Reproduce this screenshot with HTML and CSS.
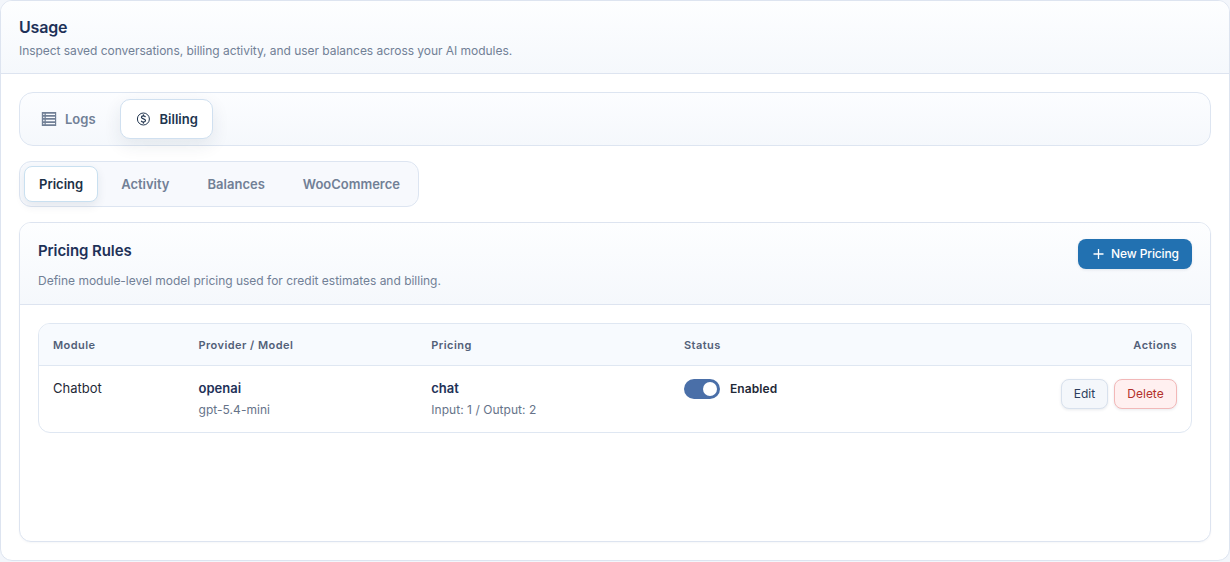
FILE: index.html
```html
<!DOCTYPE html>
<html lang="en">
<head>
<meta charset="utf-8">
<title>Usage</title>
<link rel="stylesheet" href="styles.css">
</head>
<body>
<main class="page">
  <header class="page-head">
    <h1 class="page-title">Usage</h1>
    <p class="page-desc">Inspect saved conversations, billing activity, and user balances across your AI modules.</p>
  </header>
  <div class="page-body">
    <nav class="tabs">
      <button class="tab">
        <svg class="tab-icon" viewBox="0 0 16 16"><path fill="currentColor" fill-rule="evenodd" d="M.8 1h14.400v14H.8zM2.200 2.700v1.300h1.300V2.700zm2.600 0v1.300H14V2.700zM2.200 5.700v1.400h1.300V5.700zm2.600 0v1.400H14V5.700zM2.200 8.800v1.400h1.300V8.800zm2.600 0v1.400H14V8.800zM2.200 12v1.300h1.300V12zm2.600 0v1.300H14V12z"/></svg>
        <span>Logs</span>
      </button>
      <button class="tab tab-active">
        <svg class="tab-icon" viewBox="0 0 16 16" fill="none" stroke="currentColor"><circle cx="7.400" cy="8" r="6" stroke-width="1"/><path stroke-width="1.200" d="M9.500 6.100C9.200 5.300 8.500 4.900 7.400 4.900c-1.200 0-2 .5-2 1.400C5.400 8.400 9.500 7.500 9.500 9.600c0 1-.9 1.500-2.100 1.500-1.100 0-1.900-.4-2.200-1.300"/><path stroke-width="1" d="M7.400 3.300v1.800M7.400 10.900v1.800"/></svg>
        <span>Billing</span>
      </button>
    </nav>
    <nav class="subtabs">
      <button class="subtab subtab-active">Pricing</button>
      <button class="subtab">Activity</button>
      <button class="subtab">Balances</button>
      <button class="subtab subtab-last">WooCommerce</button>
    </nav>
    <section class="card">
      <header class="card-head">
        <div>
          <h2 class="card-title">Pricing Rules</h2>
          <p class="card-desc">Define module-level model pricing used for credit estimates and billing.</p>
        </div>
        <button class="btn btn-primary">
          <svg class="plus" viewBox="0 0 12 12"><path d="M6.500 1v10M1.500 6h10" stroke="currentColor" stroke-width="1.300" fill="none"/></svg>
          <span>New Pricing</span>
        </button>
      </header>
      <div class="card-body">
        <div class="table">
          <div class="row row-head">
            <span>Module</span><span>Provider / Model</span><span>Pricing</span><span>Status</span><span class="end">Actions</span>
          </div>
          <div class="row row-data">
            <div class="module">Chatbot</div>
            <div><div class="primary">openai</div><div class="secondary">gpt-5.4-mini</div></div>
            <div><div class="primary">chat</div><div class="secondary">Input: 1 / Output: 2</div></div>
            <div class="status"><span class="switch"><span class="knob"></span></span><span class="status-text">Enabled</span></div>
            <div class="actions"><button class="btn btn-edit">Edit</button><button class="btn btn-delete">Delete</button></div>
          </div>
        </div>
      </div>
    </section>
  </div>
</main>
</body>
</html>
```

FILE: styles.css
```css
* { box-sizing: border-box; }
body { margin: 0; background: #f3f6fb; font-family: Inter, "Liberation Sans", sans-serif; color: #1f2937; }
h1, h2, p { margin: 0; }
button { font-family: inherit; margin: 0; border: 1px solid transparent; background: none; white-space: nowrap; }
.page { height: 561px; border: 1px solid #dde4f0; border-radius: 12px; background: #fff; overflow: hidden; display: flex; flex-direction: column; }
.page-head { height: 73px; flex: none; padding: 16px 18px 0; border-bottom: 1px solid #dde4f0; background: linear-gradient(180deg, #fdfeff, #f5f8fc); }
.page-title { font-size: 16px; line-height: 21px; font-weight: 600; color: #1e3158; letter-spacing: -.2px; }
.page-desc { margin-top: 4px; font-size: 12px; line-height: 18px; color: #718096; letter-spacing: -.04px; }
.page-body { flex: 1; padding: 18px; display: flex; flex-direction: column; align-items: stretch; }
.tabs { height: 54px; display: flex; gap: 9px; padding: 6px; border: 1px solid #dde5f1; border-radius: 14px; background: linear-gradient(180deg, #fcfdff, #f5f8fc); }
.tab { height: 40px; display: flex; align-items: center; gap: 8px; padding: 0 14px; border-radius: 10px; font-size: 13px; font-weight: 600; color: #718096; }
.tab-active { padding-left: 15px; background: #fff; border-color: #d0e0f0; color: #20344e; box-shadow: 0 6px 18px rgba(30, 50, 80, .09); }
.tab-icon { width: 16px; height: 16px; }
.subtabs { align-self: flex-start; height: 46px; margin-top: 15px; display: flex; gap: 8px; padding: 4px; border: 1px solid #dde5f1; border-radius: 12px; background: #f7f9fd; }
.subtab { height: 36px; padding: 0 14px; border-radius: 8px; font-size: 13px; font-weight: 600; color: #718096; }
.subtab-last { padding-right: 13px; }
.subtab-active { background: #fff; border-color: #c9e0f0; color: #1c3046; box-shadow: 0 4px 10px rgba(30, 50, 80, .09); }
.card { flex: 1; margin-top: 15px; border: 1px solid #dde4f0; border-radius: 12px; background: #fff; overflow: hidden; box-shadow: 0 1px 2px rgba(30, 50, 80, .04); }
.card-head { height: 82px; display: flex; justify-content: space-between; align-items: flex-start; padding: 16px 18px 0; border-bottom: 1px solid #dde4f0; background: linear-gradient(180deg, #fdfeff, #f5f8fc); }
.card-title { font-size: 15px; line-height: 23px; font-weight: 600; color: #1e3158; letter-spacing: -.08px; }
.card-desc { margin-top: 10px; font-size: 12px; line-height: 18px; color: #718096; letter-spacing: -.012px; }
.btn { height: 30px; border-radius: 8px; font-size: 12px; box-shadow: 0 1px 3px rgba(30, 50, 80, .1); }
.btn-primary { width: 114px; display: flex; align-items: center; justify-content: center; gap: 7px; padding: 0 0 2px 1px; background: #2271b1; color: #fff; font-weight: 500; letter-spacing: -.12px; }
.plus { width: 12px; height: 12px; margin-top: 2px; }
.card-body { padding: 18px; }
.table { height: 110px; border: 1px solid #dfe7f2; border-radius: 12px; overflow: hidden; }
.row { display: grid; grid-template-columns: 145.5px 232.800px 252.700px 1fr 150px; padding: 0 14px; }
.row-head { height: 42px; line-height: 42px; border-bottom: 1px solid #dfe7f2; background: #f7fafe; font-size: 11px; font-weight: 600; letter-spacing: .45px; color: #526078; }
.end { text-align: right; }
.row-data { padding-top: 13px; font-size: 13px; line-height: 18px; }
.primary { font-weight: 600; color: #1e3158; }
.secondary { margin-top: 4px; font-size: 12px; line-height: 18px; color: #667389; letter-spacing: .04px; }
.status { display: flex; align-items: center; align-self: start; gap: 10px; }
.switch { width: 36px; height: 20px; padding: 3px; display: flex; justify-content: flex-end; border-radius: 10px; background: #4a6fa8; }
.knob { width: 14px; height: 14px; border-radius: 50%; background: #fff; }
.status-text { font-size: 12px; font-weight: 600; letter-spacing: .08px; }
.actions { display: flex; justify-content: flex-end; gap: 6px; }
.btn-edit { width: 47px; padding: 0 0 2px; background: #f4f7fb; border-color: #d8e1ed; color: #2c3e5d; }
.btn-delete { width: 63px; padding: 0 0 2px; background: #fff0f0; border-color: #f2b8b8; color: #b3302b; }
```
